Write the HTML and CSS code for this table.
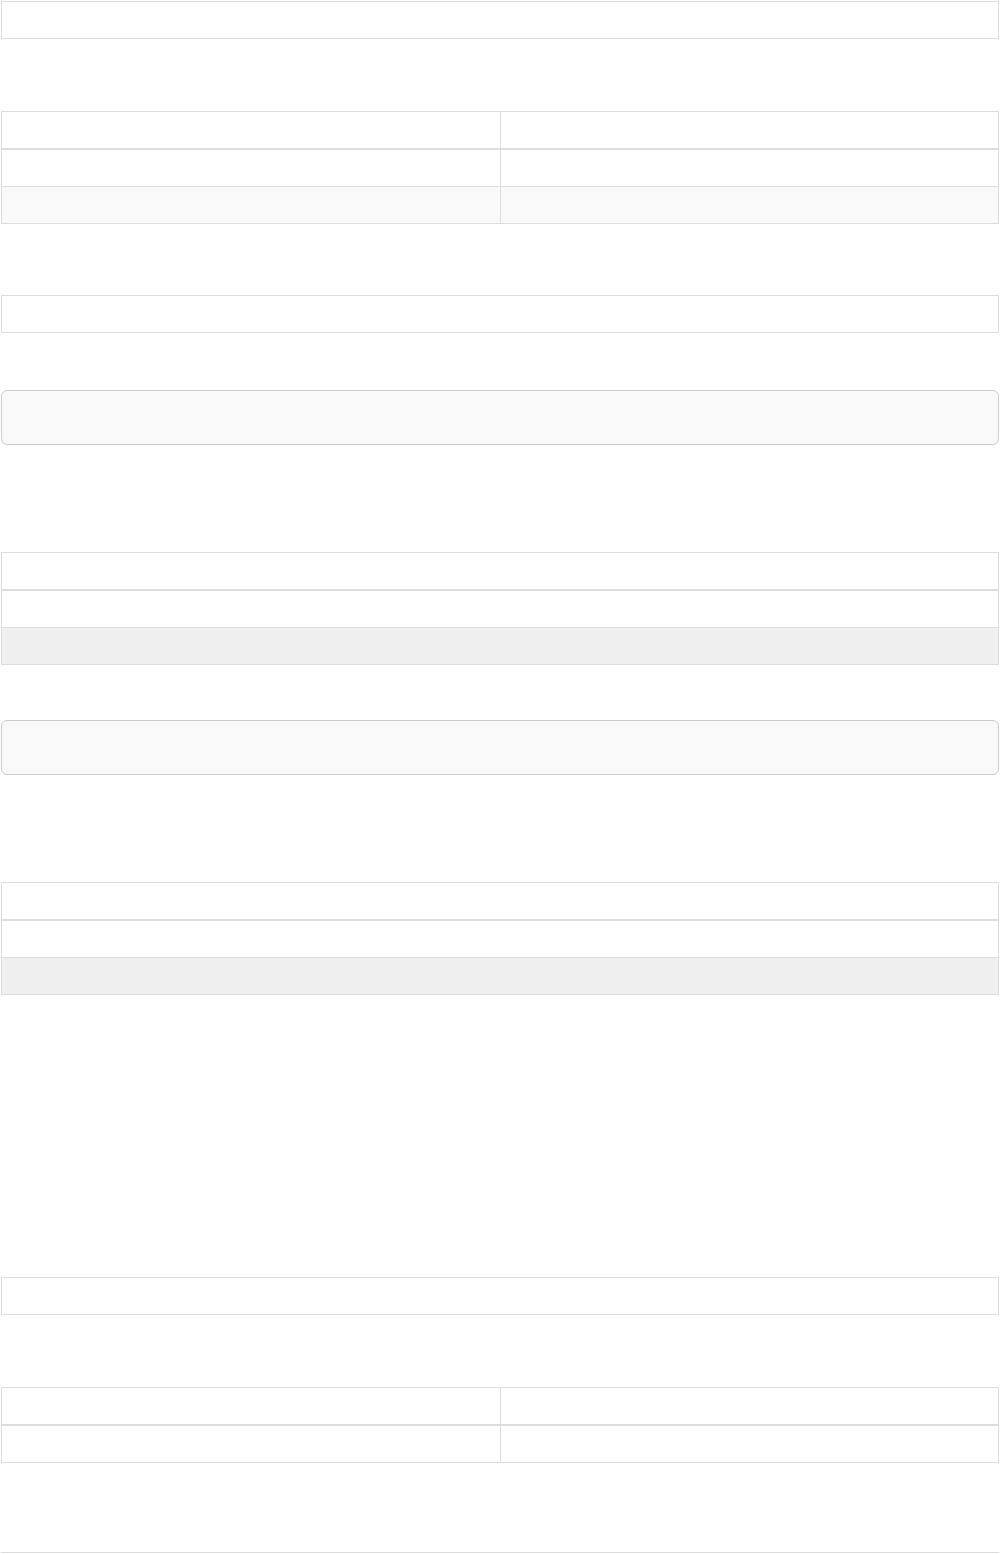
FILE: index.html
```html
<!DOCTYPE html>
<html lang="en">
<head>
  <meta charset="UTF-8" />
  <meta name="viewport" content="width=device-width, initial-scale=1.0"/>
  <title>Tables</title>
  <link rel="stylesheet" href="styles.css">
</head>
<body>
  <div class="page">
    <table class="grid gap-72">
      <tbody>
        <tr><td>&nbsp;</td></tr>
      </tbody>
    </table>

    <table class="grid gap-71">
      <thead>
        <tr><th>&nbsp;</th><th>&nbsp;</th></tr>
      </thead>
      <tbody>
        <tr><td>&nbsp;</td><td>&nbsp;</td></tr>
        <tr class="striped"><td>&nbsp;</td><td>&nbsp;</td></tr>
      </tbody>
    </table>

    <table class="grid gap-57">
      <tbody>
        <tr><td>&nbsp;</td></tr>
      </tbody>
    </table>

    <div class="well gap-107"></div>

    <table class="grid gap-55">
      <thead>
        <tr><th>&nbsp;</th></tr>
      </thead>
      <tbody>
        <tr><td>&nbsp;</td></tr>
        <tr class="active"><td>&nbsp;</td></tr>
      </tbody>
    </table>

    <div class="well gap-107"></div>

    <table class="grid gap-282">
      <thead>
        <tr><th>&nbsp;</th></tr>
      </thead>
      <tbody>
        <tr><td>&nbsp;</td></tr>
        <tr class="active"><td>&nbsp;</td></tr>
      </tbody>
    </table>

    <table class="grid gap-72">
      <tbody>
        <tr><td>&nbsp;</td></tr>
      </tbody>
    </table>

    <table class="grid gap-89">
      <thead>
        <tr><th>&nbsp;</th><th>&nbsp;</th></tr>
      </thead>
      <tbody>
        <tr><td>&nbsp;</td><td>&nbsp;</td></tr>
      </tbody>
    </table>

    <hr class="rule">
  </div>
</body>
</html>
```

FILE: styles.css
```css
html, body {
  margin: 0;
  padding: 0;
  background-color: #fff;
  font-family: 'Liberation Sans', Arial, sans-serif;
  font-size: 14px;
  line-height: 1.42857143;
  color: #333;
}

.page {
  padding: 1px 1px 0 1px;
}

.grid {
  width: 100%;
  border-collapse: collapse;
  border-spacing: 0;
  border: 1px solid #ddd;
  table-layout: fixed;
}

.grid th,
.grid td {
  padding: 8px;
  border: 1px solid #ddd;
  text-align: left;
}

.grid thead th {
  border-bottom: 2px solid #ddd;
}

.grid .striped td {
  background-color: #f9f9f9;
}

.grid .active td {
  background-color: #efefef;
}

.well {
  height: 55px;
  box-sizing: border-box;
  background-color: #f9f9f9;
  border: 1px solid #ccc;
  border-radius: 6px;
}

.gap-55 { margin-bottom: 55px; }
.gap-57 { margin-bottom: 57px; }
.gap-71 { margin-bottom: 71px; }
.gap-72 { margin-bottom: 72px; }
.gap-89 { margin-bottom: 89px; }
.gap-107 { margin-bottom: 107px; }
.gap-282 { margin-bottom: 282px; }

.rule {
  margin: 0;
  border: 0;
  border-top: 1px solid #ddd;
}
```
